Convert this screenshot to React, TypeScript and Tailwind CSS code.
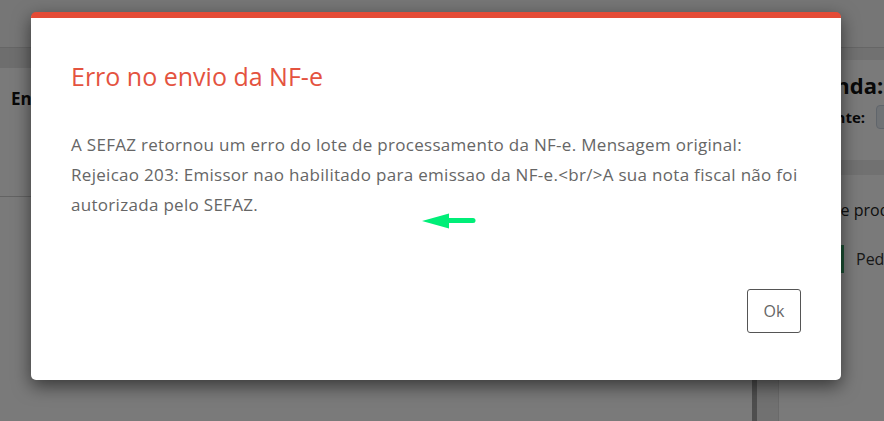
import React from "react";

function GreenArrow() {
  return (
    <svg width="56" height="18" viewBox="0 0 56 18" className="block">
      <path d="M1 9 L28 1.5 L28 16.5 Z" fill="#00ee78" />
      <line x1="24" y1="8.5" x2="52" y2="8.5" stroke="#00ee78" strokeWidth="5" strokeLinecap="round" />
    </svg>
  );
}

export default function App() {
  return (
    <div
      className="relative h-[421px] w-[884px] overflow-hidden bg-white text-[#333]"
      style={{ fontFamily: '"Open Sans", "Noto Sans", sans-serif' }}
    >
      {/* Underlying page */}
      <div className="flex h-full flex-col">
        <div className="h-[48px] shrink-0 border-b border-[#d6d6d6] bg-[#f6f6f6]" />
        <div className="flex flex-1">
          <div className="flex w-[752px] shrink-0 flex-col">
            <div className="h-[20px] bg-[#e6e6e6]" />
            <div className="h-[129px] border-b border-[#cfcfcf] bg-white pl-[11px] pt-[18px]">
              <div className="text-[17px] font-bold text-[#111]">Envio</div>
            </div>
            <div className="flex-1 bg-white" />
          </div>
          <div className="w-[5px] shrink-0 bg-[#a4a4a4]" />
          <div className="w-[21px] shrink-0 bg-[#ececec]" />
          <div className="flex flex-1 flex-col bg-[#ececec]">
            <div className="h-[12px]" />
            <div className="h-[100px] border-l border-[#ddd] bg-white pl-[29px] pt-[10px]">
              <div className="whitespace-nowrap text-[22px] font-bold leading-[30px] text-[#111]">Venda:</div>
              <div className="mt-[5px] flex items-center gap-[11px] whitespace-nowrap text-[15px] font-bold text-[#111]">
                <span>Cliente:</span>
                <div className="h-[24px] w-[80px] rounded-[4px] border border-[#c9d3df] bg-[#e9eef5]" />
              </div>
            </div>
            <div className="h-[15px]" />
            <div className="flex-1 border-l border-[#ddd] bg-white pl-[13px] pt-[23px]">
              <div className="whitespace-nowrap text-[16px] text-[#222]">Lista de produtos</div>
              <div className="mt-[23px] flex items-center">
                <div className="h-[28px] w-[52px] border-r-[4px] border-[#3aa56b] bg-white" />
                <span className="ml-[12px] text-[16px] text-[#333]">Pedido</span>
              </div>
            </div>
          </div>
        </div>
      </div>

      {/* Backdrop */}
      <div className="absolute inset-0 bg-black/[0.52]" />

      {/* Modal */}
      <div className="absolute left-[31px] top-[12px] h-[368px] w-[810px] overflow-hidden rounded-[5px] border-t-[6px] border-[#e44b36] bg-white shadow-[0_6px_18px_rgba(0,0,0,0.55)]">
        <div className="flex h-full flex-col px-[40px]">
          <h2 className="mt-[42px] text-[25px] font-normal leading-[32px] text-[#e4533f]">Erro no envio da NF-e</h2>
          <div className="mt-[38px] text-[17px] leading-[30px] tracking-[0.3px] text-[#666]">
            <div className="whitespace-nowrap">A SEFAZ retornou um erro do lote de processamento da NF-e. Mensagem original:</div>
            <div className="whitespace-nowrap">Rejeicao 203: Emissor nao habilitado para emissao da NF-e.&lt;br/&gt;A sua nota fiscal não foi</div>
            <div className="whitespace-nowrap">autorizada pelo SEFAZ.</div>
          </div>
          <div className="mt-auto mb-[47px] flex justify-end">
            <button className="h-[44px] w-[54px] rounded-[3px] border-[1.5px] border-[#555] bg-white text-[16px] text-[#666]">
              Ok
            </button>
          </div>
        </div>
        <div className="absolute left-[390px] top-[194px]">
          <GreenArrow />
        </div>
      </div>
    </div>
  );
}
